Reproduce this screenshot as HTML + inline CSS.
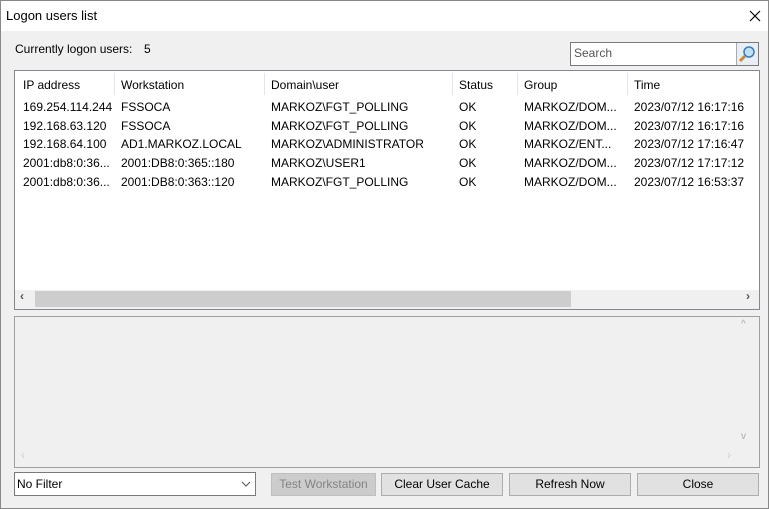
<!DOCTYPE html><html><head><style>
*{box-sizing:border-box;margin:0;padding:0}
body{width:769px;height:509px;background:#f0f0f0;font:12px "Liberation Sans",sans-serif;color:#000;position:relative;overflow:hidden;border:1px solid #888}
.a{position:absolute;white-space:nowrap}
.btn{position:absolute;top:472px;height:23px;background:#e1e1e1;border:1px solid #adadad;text-align:center;line-height:21px}
</style></head><body>
<div class="a" style="left:0;top:0;width:767px;height:30px;background:#fff"></div>
<div class="a" style="left:5px;top:7px;font-size:13px">Logon users list</div>
<svg class="a" style="left:748px;top:9px" width="12" height="12"><path d="M1 1L11 11M11 1L1 11" stroke="#000" stroke-width="1.2"/></svg>
<div class="a" style="left:14px;top:41px">Currently logon users:</div>
<div class="a" style="left:143px;top:41px">5</div>
<div class="a" style="left:569px;top:41px;width:189px;height:24px;background:#fff;border:1px solid #7a7a7a"></div>
<div class="a" style="left:573px;top:45px;color:#555">Search</div>
<div class="a" style="left:735px;top:42px;width:22px;height:22px;background:#e8eef4;border-left:1px solid #aaa"></div>
<svg class="a" style="left:737px;top:44px" width="18" height="18"><circle cx="11" cy="7" r="5" fill="#bfe0f5" stroke="#3a7dbf" stroke-width="1.5"/><path d="M7 11L2 16" stroke="#c98a3a" stroke-width="3"/></svg>
<div class="a" style="left:13px;top:69px;width:746px;height:240px;background:#fff;border:1px solid #828790"></div>
<div class="a" style="left:113px;top:72px;width:1px;height:22px;background:#e5e5e5"></div>
<div class="a" style="left:263px;top:72px;width:1px;height:22px;background:#e5e5e5"></div>
<div class="a" style="left:451px;top:72px;width:1px;height:22px;background:#e5e5e5"></div>
<div class="a" style="left:516px;top:72px;width:1px;height:22px;background:#e5e5e5"></div>
<div class="a" style="left:626px;top:72px;width:1px;height:22px;background:#e5e5e5"></div>
<div class="a" style="left:22px;top:77px">IP address</div><div class="a" style="left:120px;top:77px">Workstation</div><div class="a" style="left:270px;top:77px">Domain\user</div><div class="a" style="left:458px;top:77px">Status</div><div class="a" style="left:523px;top:77px">Group</div><div class="a" style="left:633px;top:77px">Time</div>
<div class="a" style="left:22px;top:97px;line-height:18.7px">169.254.114.244<br>192.168.63.120<br>192.168.64.100<br>2001:db8:0:36...<br>2001:db8:0:36...</div>
<div class="a" style="left:120px;top:97px;line-height:18.7px">FSSOCA<br>FSSOCA<br>AD1.MARKOZ.LOCAL<br>2001:DB8:0:365::180<br>2001:DB8:0:363::120</div>
<div class="a" style="left:270px;top:97px;line-height:18.7px">MARKOZ\FGT_POLLING<br>MARKOZ\FGT_POLLING<br>MARKOZ\ADMINISTRATOR<br>MARKOZ\USER1<br>MARKOZ\FGT_POLLING</div>
<div class="a" style="left:458px;top:97px;line-height:18.7px">OK<br>OK<br>OK<br>OK<br>OK</div>
<div class="a" style="left:523px;top:97px;line-height:18.7px">MARKOZ/DOM...<br>MARKOZ/DOM...<br>MARKOZ/ENT...<br>MARKOZ/DOM...<br>MARKOZ/DOM...</div>
<div class="a" style="left:633px;top:97px;line-height:18.7px">2023/07/12 16:17:16<br>2023/07/12 16:17:16<br>2023/07/12 17:16:47<br>2023/07/12 17:17:12<br>2023/07/12 16:53:37</div>
<div class="a" style="left:14px;top:289px;width:744px;height:19px;background:#f0f0f0"></div>
<div class="a" style="left:34px;top:290px;width:536px;height:16px;background:#cdcdcd"></div>
<div class="a" style="left:19px;top:288px;font-weight:bold;color:#555">‹</div>
<div class="a" style="left:745px;top:288px;font-weight:bold;color:#555">›</div>
<div class="a" style="left:13px;top:315px;width:746px;height:152px;border:1px solid #a0a0a0;background:#f0f0f0"></div>
<div class="a" style="left:740px;top:318px;color:#aaa;font-size:10px">^</div>
<div class="a" style="left:740px;top:430px;color:#aaa;font-size:10px">v</div>
<div class="a" style="left:20px;top:447px;color:#ccc">‹</div><div class="a" style="left:726px;top:447px;color:#ccc">›</div>
<div class="a" style="left:13px;top:471px;width:242px;height:24px;background:#fff;border:1px solid #7a7a7a"></div>
<div class="a" style="left:16px;top:476px">No Filter</div>
<svg class="a" style="left:240px;top:479px" width="10" height="8"><path d="M1 2L5 6L9 2" stroke="#555" fill="none"/></svg>
<div class="btn" style="left:270px;width:105px;background:#cccccc;border-color:#bfbfbf;color:#838383">Test Workstation</div>
<div class="btn" style="left:380px;width:122px">Clear User Cache</div>
<div class="btn" style="left:508px;width:122px">Refresh Now</div>
<div class="btn" style="left:636px;width:122px">Close</div>
</body></html>
